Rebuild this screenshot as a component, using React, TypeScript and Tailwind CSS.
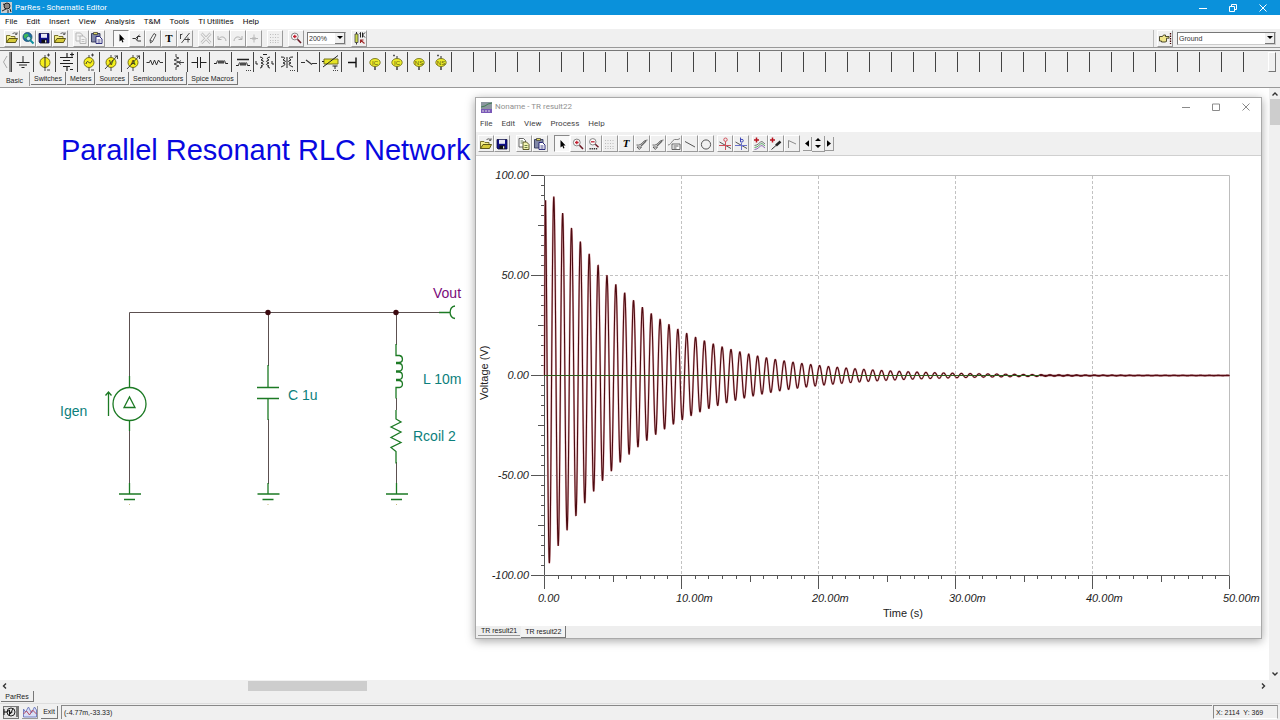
import React from "react";

const UI = "font-[Roboto,'Noto_Sans',sans-serif]";
const OLD = "font-['Liberation_Sans',Arial,sans-serif]";

type GlyphProps = { name: string };

/* 16x16 toolbar glyphs */
function Glyph({ name }: GlyphProps) {
  const glyphs: Record<string, React.ReactNode> = {
    open: (
      <>
        <path d="M2.500 12.500V5.500h3.500l1 1h4v2" fill="#f4ee8a" stroke="#6b6420" strokeWidth=".9" />
        <path d="M2.500 12.500l2.500-4h8.500L11.500 12.500z" fill="#d6ca3a" stroke="#4d470c" strokeWidth=".9" />
        <path d="M8.500 4c1-1.500 2.500-1.500 4-.2M13 2.300v2h-2" fill="none" stroke="#333" strokeWidth=".8" />
      </>
    ),
    web: (
      <>
        <circle cx="7.500" cy="7" r="4.500" fill="#1f6fa8" stroke="#164a70" strokeWidth=".8" />
        <path d="M4 5c2-2 4-1 4.500 0S7 7 6.500 8 4.500 8 4 7.500zM9.500 7l2 0-1 3-1.500-1z" fill="#3fb858" />
        <path d="M9 9l4.500 4.500" stroke="#0b8f9e" strokeWidth="2" />
        <circle cx="8.500" cy="8.500" r="2.200" fill="#bfe6ee" stroke="#0b5f6e" strokeWidth=".8" />
      </>
    ),
    save: (
      <>
        <path d="M3 3.500h10v9.500H4L3 12z" fill="#10108a" stroke="#0a0a3c" strokeWidth=".8" />
        <path d="M5 3.800h6v4H5z" fill="#e9e9f4" />
        <path d="M5.500 9.500h5.500v3.500H5.500z" fill="#111" />
        <path d="M9 10.200h1.300v2.300H9z" fill="#ddd" />
      </>
    ),
    copyGrey: (
      <>
        <path d="M3 3h4.500l2 2v6H3z" fill="#f3f3f3" stroke="#b5b5b5" />
        <path d="M7 6h3.500l2.500 2.500V13.500H7z" fill="#f3f3f3" stroke="#b5b5b5" />
        <path d="M8.500 9.500h3M8.500 11.500h3M4.500 6h2.500" stroke="#b5b5b5" strokeWidth=".8" />
      </>
    ),
    copy: (
      <>
        <path d="M3 2.500h4.500l2 2V11H3z" fill="#fff" stroke="#555" strokeWidth=".9" />
        <path d="M7 6h3.500l2.500 2.500V13.500H7z" fill="#f2f4b0" stroke="#4a4a16" strokeWidth=".9" />
        <path d="M8.500 9.500h3M8.500 11.500h3M4.500 5h2.500M4.500 7h2" stroke="#44602a" strokeWidth=".8" />
      </>
    ),
    paste: (
      <>
        <path d="M2.500 3.500h8.500v8.500H2.500z" fill="#8087a6" stroke="#33385a" strokeWidth=".9" />
        <path d="M4.500 2.500h4v2h-4z" fill="#e0d860" stroke="#333" strokeWidth=".7" />
        <path d="M7 6.500h3.500L13 9v4.500H7z" fill="#fff" stroke="#191970" strokeWidth=".9" />
        <path d="M8.500 10h3M8.500 12h3" stroke="#191970" strokeWidth=".8" />
      </>
    ),
    cursor: <path d="M6.500 4v7.500l1.800-1.500 1.100 2.500 1.100-.5-1.100-2.400h2.200z" fill="#000" />,
    node: (
      <path d="M3.500 8.500h3l4-3.500M6.500 8.500l2 2.500h3.500M8.500 6.500v3M8.500 6.500h3" fill="none" stroke="#333" strokeWidth="1" />
    ),
    pencil: (
      <path d="M5.500 13l-.5-3L9 3.500l2 1.300L7.500 11.500zM5 10l2.500 1.500" fill="#f6f6f6" stroke="#444" strokeWidth=".9" />
    ),
    wire: (
      <path d="M3.500 4v5M3.500 5l2-1M12.500 3L4.500 13M7.500 9.500h5.500M11 7.500v5" fill="none" stroke="#333" strokeWidth=".9" />
    ),
    del: (
      <>
        <path d="M3.500 3.500l9 9.500M12.500 3.500l-9 9.500" stroke="#b4b4b4" strokeWidth="2.600" />
        <path d="M3.500 3.500l9 9.500M12.500 3.500l-9 9.500" stroke="#f0f0f0" strokeWidth="1.200" />
      </>
    ),
    undo: <path d="M4 6v3.500h3.500M4.500 9c2-3 7-3 7.500 2" fill="none" stroke="#b0b0b0" strokeWidth="1" />,
    redo: <path d="M12 6v3.500H8.500M11.500 9c-2-3-7-3-7.500 2" fill="none" stroke="#b0b0b0" strokeWidth="1" />,
    plus: <path d="M8 4.500v8M4 8.500h8M6.500 7l3 3M9.500 7l-3 3" stroke="#b8b8b8" strokeWidth="1" />,
    grid: <path d="M3 4.500h10M3 7.500h10M3 10.500h10M3 12.500h10" stroke="#bdbdbd" strokeDasharray="1 1.500" />,
    zoomIn: (
      <>
        <circle cx="6.800" cy="6.500" r="3.400" fill="#fff" stroke="#777" strokeWidth=".9" />
        <path d="M5 6.500h3.600M6.800 4.700v3.600" stroke="#c02030" strokeWidth="1.300" />
        <path d="M9.500 9.200l3.500 3.800" stroke="#6b1a25" strokeWidth="1.600" />
      </>
    ),
    zoomOut: (
      <>
        <circle cx="6.800" cy="5.800" r="3.200" fill="#fff" stroke="#777" strokeWidth=".9" />
        <path d="M5 5.800h3.600" stroke="#c02030" strokeWidth="1.300" />
        <path d="M9.300 8.300l3.200 3" stroke="#6b1a25" strokeWidth="1.500" />
        <path d="M3.500 12.700h8.500" stroke="#333" strokeWidth="1.600" strokeDasharray="1.300 .8" />
      </>
    ),
    values: (
      <>
        <path d="M4 4h3v8.500H4z" fill="#cbd84a" stroke="#444" strokeWidth=".8" />
        <path d="M5.500 2v2M5.500 12.500v2" stroke="#333" />
        <path d="M9.500 2.500v5M8.500 3.500l1-1M11.500 2.500v5M14 2.500l-2.500 2.500L14 7.500" fill="none" stroke="#222" />
        <path d="M13.500 13.500l-4-3.500M9.500 13v-3h3" fill="none" stroke="#a02a2a" strokeWidth="1.100" />
      </>
    ),
    hand: (
      <>
        <path d="M2.500 6.500h3l1-1.500h2v1.500h3.500v1.700H9.500v3.300L8 12H4.500v-1h-2z" fill="#efe58a" stroke="#3c3a20" strokeWidth=".9" />
        <path d="M13.500 3v11" stroke="#400" strokeWidth="1.300" strokeDasharray="1.500 1" />
      </>
    ),
    curveA: (
      <>
        <path d="M2.500 9c3.500.5 4-.5 6-2.500s3-2 5-2.500" fill="none" stroke="#555" strokeWidth=".9" />
        <path d="M12 5L7 10" stroke="#666" strokeWidth="1.500" />
        <path d="M3 11h4.500l-2.200 2.500z" fill="#eee" stroke="#444" strokeWidth=".8" />
      </>
    ),
    legend: (
      <>
        <path d="M2 9c2 0 3-2 5-4.500S11 5 14 2.500" fill="none" stroke="#777" strokeWidth=".9" />
        <path d="M6 8h8v5.500H6z" fill="#fff" stroke="#555" strokeWidth=".9" />
        <path d="M7.500 10h5M7.500 12h3" stroke="#333" strokeWidth=".8" />
      </>
    ),
    line: <path d="M3 5.500l10 5.500" stroke="#555" />,
    circle: <circle cx="8" cy="8.500" r="4.600" fill="none" stroke="#555" />,
    cursorA: (
      <>
        <path d="M2.500 6L14 12.500" stroke="#444" strokeWidth=".9" />
        <path d="M8.500 5.500V14M2 9.500h12" stroke="#d0505a" />
        <circle cx="8.500" cy="3.700" r="1.700" fill="none" stroke="#d0505a" />
      </>
    ),
    cursorB: (
      <>
        <path d="M2.500 6L14 12.500" stroke="#444" strokeWidth=".9" />
        <path d="M8.500 7V14M2 9.500h12" stroke="#6870cc" />
        <path d="M7.500 1.500v4.500h1.500a1.300 1.300 0 000-2.600H7.500" fill="none" stroke="#4048b8" />
      </>
    ),
    addCurves: (
      <>
        <path d="M2.500 9.500c4 0 5-4 7.500-4l3 2.500" fill="none" stroke="#666" strokeWidth=".9" />
        <path d="M2.500 11.500c4 0 5-4 7.500-4l3 2.500" fill="none" stroke="#4aa25a" strokeWidth=".9" />
        <path d="M2.500 13.500c4 0 5-4 7.500-4l3 2.500" fill="none" stroke="#8a5ab0" strokeWidth=".9" />
        <path d="M4.500 1.500v5M2 4h5" stroke="#b81420" strokeWidth="1.500" />
      </>
    ),
    probe: (
      <>
        <path d="M3.500 13.500l4.500-4" stroke="#333" />
        <path d="M8 9.500L12.500 5.500" stroke="#222" strokeWidth="2.500" />
        <path d="M4.500 1.500v5M2 4h5" stroke="#b81420" strokeWidth="1.500" />
      </>
    ),
    corner: <path d="M4.500 12V4.500l7.500 3.500" fill="none" stroke="#8a8a8a" />,
    analysis: (
      <>
        <circle cx="8" cy="8" r="4" fill="none" stroke="#222" />
        <path d="M1 8h3l2.500-2v4l3-2M14 3v10M1 5v6M10 5l-4 6" fill="none" stroke="#111" />
      </>
    ),
    diagram: (
      <>
        <path d="M1.500 13V5l2 3 3-5 3 6 3-6 2 3v7z" fill="#d9dff6" stroke="#6a75bd" strokeWidth=".9" />
        <path d="M1.500 10l3-3 3 4 3-5 4 4" fill="none" stroke="#b54a64" />
      </>
    ),
  };
  return (
    <svg viewBox="0 0 16 16" className="h-4 w-4 shrink-0" aria-hidden="true">
      {glyphs[name]}
    </svg>
  );
}

function ToolButton({ name, pressed = false }: { name: string; pressed?: boolean }) {
  const edge = pressed
    ? "border-t-[#8a8a8a] border-l-[#8a8a8a] border-r-white border-b-white bg-[#f8f8f8]"
    : "border-t-white border-l-white border-r-[#9a9a9a] border-b-[#9a9a9a] bg-[#f0f0f0]";
  return (
    <button
      aria-label={name}
      className={`flex h-[17px] w-4 shrink-0 items-center justify-center overflow-hidden border ${edge}`}
    >
      {name === "text" ? (
        <span className="font-['Liberation_Serif',serif] text-[11px] leading-none font-bold text-black">T</span>
      ) : name === "textItalic" ? (
        <span className="font-['Liberation_Serif',serif] text-[11px] leading-none font-bold text-black italic">T</span>
      ) : (
        <Glyph name={name} />
      )}
    </button>
  );
}

function ToolGroup({ names, pressed }: { names: string[]; pressed?: string }) {
  return (
    <div className="flex">
      {names.map((n, i) => (
        <ToolButton key={i} name={n} pressed={n === pressed} />
      ))}
    </div>
  );
}

const coil = "q1.500-6 2.500 0q1-6 2 0q1-6 2 0q1-6 2.500 0";

function source(inner: React.ReactNode, arrow = false) {
  return (
    <>
      <path d="M11 3v16" stroke="#444" />
      <circle cx="11" cy="10.500" r="5" fill="#f6ee1c" stroke="#6b6710" strokeWidth=".9" />
      {inner}
      {arrow ? (
        <path d="M5 17L17.500 3.500M14.500 4h3v3" fill="none" stroke="#333" strokeWidth=".9" />
      ) : (
        <path d="M13 3h3M14.500 1.500v3M13 18h3" stroke="#333" strokeWidth=".9" />
      )}
    </>
  );
}

function meterChip(label: string, dot: boolean) {
  return (
    <>
      <path d="M11 14v4" stroke="#222" strokeWidth="1.300" />
      <ellipse cx="11" cy="10.500" rx="5.200" ry="4" fill="#eceb2a" stroke="#77751c" strokeWidth=".9" />
      <text x="11" y="12.500" textAnchor="middle" fontSize="6" fill="#55530c" fontFamily="Liberation Sans">
        {label}
      </text>
      {dot && <path d="M7 3.500h2M11 4v2.500" stroke="#555" strokeWidth="1.300" />}
    </>
  );
}

const letter = (t: string) => (
  <text x="11" y="13" textAnchor="middle" fontSize="7" fontWeight="700" fill="#4a470c" fontFamily="Liberation Sans">
    {t}
  </text>
);

const parts: { label: string; art: React.ReactNode }[] = [
  { label: "Ground", art: <path d="M11 4v6M4.500 10.500h13M7 13h8M9.500 15.500h3" stroke="#222" fill="none" /> },
  { label: "Voltage source", art: source(<path d="M11 5v11" stroke="#333" />) },
  {
    label: "Battery",
    art: <path d="M11 1v4M4 5.500h13M7 8.500h7M4 11.500h13M7 14.500h7M11 15v4M14 2.500h4M16 .5v4M14 17.500h3" stroke="#222" fill="none" strokeWidth="1.200" />,
  },
  { label: "Voltage generator", art: source(<path d="M8 12c1-4 2-2 3-1.500s2 1 3-2" fill="none" stroke="#333" />) },
  { label: "Voltmeter", art: source(letter("V"), true) },
  { label: "Ammeter", art: source(letter("A"), true) },
  { label: "Resistor", art: <path d="M2.500 10.500h3l1-2.500 2 5 2-5 2 5 2-5 1.500 2.500h3" stroke="#333" fill="none" /> },
  {
    label: "Potentiometer",
    art: <path d="M10 2v3l3 1-5 2 5 2-5 2 5 2-3 1v3M18 10.500h-5M15 8.500l-2.500 2 2.500 2" stroke="#444" fill="none" />,
  },
  { label: "Capacitor", art: <path d="M3.500 10.500h6M9.500 5v11M12.500 5v11M12.500 10.500h6" stroke="#222" fill="none" /> },
  { label: "Inductor", art: <path d={"M4 11.500h2.500" + coil + "h2.500"} stroke="#222" fill="none" /> },
  {
    label: "Coil with core",
    art: (
      <>
        <path d={"M4 13.500h2.500" + coil + "h2.500"} stroke="#222" fill="none" />
        <path d="M5 7.500h12" stroke="#222" strokeWidth="1.500" />
        <path d="M14 18.500h6" stroke="#444" strokeDasharray="1 1" />
      </>
    ),
  },
  {
    label: "Coupled inductors",
    art: (
      <path d="M6 5q5 1 1 3 5 1 0 3 5 1 0 3 3 1-1 2M16 5q-5 1-1 3-5 1 0 3-5 1 0 3-3 1 1 2M2 9v3h2M18 9v3h2M9 2.500h4" stroke="#222" fill="none" />
    ),
  },
  {
    label: "Transformer",
    art: (
      <>
        <path d="M5 5q6 0 2 3 5 1 0 3 5 1-2 4M17 5q-6 0-2 3-5 1 0 3-5 1 2 4M11 5v11" stroke="#222" fill="none" />
        <path d="M14 18.500h6" stroke="#444" strokeDasharray="1 1" />
      </>
    ),
  },
  { label: "Switch", art: <path d="M3 10.500h4M8 8l6 4.500M14 11.500h5" stroke="#333" fill="none" strokeWidth="1.200" /> },
  {
    label: "Controlled source",
    art: (
      <>
        <path d="M4 7h14v5H4z" fill="#e6e424" stroke="#77751c" />
        <path d="M3 15L18 3.500M2 9.500h2M12.500 14h5M15 14v3" stroke="#222" fill="none" />
        <path d="M13 18.500h6" stroke="#444" strokeDasharray="1 1" />
      </>
    ),
  },
  { label: "Jumper", art: <path d="M6 10.500h8M14 5.500v10" stroke="#111" fill="none" strokeWidth="1.400" /> },
  { label: "Initial condition", art: meterChip("IC", false) },
  { label: "Initial condition probe", art: meterChip("IC", true) },
  { label: "Nodeset", art: meterChip("NS", false) },
  { label: "Nodeset probe", art: meterChip("NS", true) },
];

function PartsBar() {
  const slots = Array.from({ length: 57 }, (_, i) => parts[i]);
  return (
    <div className="flex h-[22px] items-center border-t border-[#777] bg-[#f0f0f0] pr-1">
      <button aria-label="Scroll left" className="flex h-5 w-[11px] shrink-0 items-center justify-center border-r-2 border-[#888]">
        <svg viewBox="0 0 6 14" className="h-[14px] w-[6px]" aria-hidden="true">
          <path d="M5 1L1.500 7 5 13" fill="none" stroke="#aaa" />
        </svg>
      </button>
      <div className="flex min-w-0 flex-1 overflow-hidden">
        {slots.map((p, i) => (
          <button
            key={i}
            aria-label={p ? p.label : "Empty slot"}
            className="h-5 w-[22px] shrink-0 border-l border-[#444]"
          >
            {p && (
              <svg viewBox="0 0 22 20" className="h-5 w-[22px]" aria-hidden="true">
                {p.art}
              </svg>
            )}
          </button>
        ))}
      </div>
      <button aria-label="Scroll right" className="h-5 w-2 shrink-0 border border-t-white border-r-[#777] border-b-[#777] border-l-white" />
    </div>
  );
}

function Ground({ x }: { x: number }) {
  return (
    <>
      <path d={`M${x} 483v11M${x - 10.500} 494h22M${x - 5.500} 499.500h11`} stroke="#1c7a24" fill="none" strokeWidth="1.300" />
      <path d={`M${x - 0.500} 504.500h1`} stroke="#c9bb7a" />
    </>
  );
}

function Schematic() {
  return (
    <svg viewBox="0 88 475 592" className={`h-[592px] w-[475px] shrink-0 ${OLD}`} role="img" aria-label="Parallel resonant RLC network">
      <text x="61" y="160" fontSize="29" fill="#0808e0">Parallel Resonant RLC Network</text>
      <g fill="none" stroke="#5c5050" strokeWidth="1">
        <path d="M129.500 377V312.500H440M129.500 430v54M268.500 312v54M268.500 419v65M396.500 312v33M396.500 398v12M396.500 462v22" />
      </g>
      <g fill="none" stroke="#1c7a24" strokeWidth="1.300">
        <path d="M129.500 376v11.500M129.500 420v11" />
        <circle cx="129.500" cy="404" r="16.500" />
        <path d="M124 407.500h11l-5.500-10.500zM108.500 416v-23M105.500 395.500l3-3.500 3 3.500" />
        <path d="M268 365v22M257 387.500h22M257 398.500h22M268 398v22" />
        <path d="M396 344v11.500h3.500c4 1 4 7-.5 7h-3M396 363.500h3c4.500 0 4.500 7.500 0 7.500h-3M396 372h3c4.500 0 4.500 7.500 0 7.500h-3M396 380.500h3c4.500 0 4.500 7 .5 7H396v11" />
        <path d="M396 410v9l5 3-10 5 10 5-10 5.500 10 5-10 5 5 4v12" />
        <path d="M439 312.500h11M455 306c-6.500 1-6.500 11.500 0 12.500" />
      </g>
      <circle cx="268" cy="312.500" r="2.700" fill="#3c0a10" />
      <circle cx="396" cy="312.500" r="2.700" fill="#3c0a10" />
      <Ground x={129.5} />
      <Ground x={268} />
      <Ground x={396.5} />
      <g fontSize="14" fill="#0c7f7c">
        <text x="60" y="416">Igen</text>
        <text x="288" y="400">C 1u</text>
        <text x="423" y="384">L 10m</text>
        <text x="413" y="441">Rcoil 2</text>
      </g>
      <text x="433" y="298" fontSize="14" fill="#7a0a7a">Vout</text>
    </svg>
  );
}

function wavePath() {
  const pts = ["M544.5 375.5", "L545 209"];
  for (let x = 545.6; x <= 1229.5; x += 0.2) {
    const v = 99.5 * Math.exp(-(x - 544) / 92) * Math.cos((2 * Math.PI * (x - 544.95)) / 8.86);
    pts.push(`L${x.toFixed(1)} ${(375.5 - v * 2).toFixed(2)}`);
  }
  return pts.join("");
}
const WAVE = wavePath();

function Chart() {
  const yMinor = Array.from({ length: 41 }, (_, i) => i);
  const xMinor = Array.from({ length: 51 }, (_, i) => i);
  const yLabels = ["100.00", "50.00", "0.00", "-50.00", "-100.00"];
  const xLabels: [number, string][] = [
    [538, "0.00"],
    [676, "10.00m"],
    [812, "20.00m"],
    [949, "30.00m"],
    [1086, "40.00m"],
    [1223, "50.00m"],
  ];
  return (
    <svg viewBox="476 156 785 470" preserveAspectRatio="xMinYMin meet" className={`h-full w-full ${OLD}`} role="img" aria-label="Voltage over time">
      <g stroke="#c2c2c2" strokeDasharray="3 2" fill="none">
        <path d="M545 275.500H1229M545 475.500H1229" />
        <path d="M681.500 176V575M818.500 176V575M955.500 176V575M1092.500 176V575" />
      </g>
      <path d="M545 175.500H1229.500V575" fill="none" stroke="#bdbdbd" />
      <path d="M544.500 175.500V575.500H1229.500" fill="none" stroke="#555" />
      <g stroke="#555">
        {yMinor.map((i) => (
          <path key={i} d={`M${i % 10 === 0 ? 531 : i % 5 === 0 ? 538 : 541} ${175.5 + i * 10}H544`} />
        ))}
        {xMinor.map((i) => (
          <path key={i} d={`M${Math.round(544 + i * 13.7) + 0.5} 576V${i % 10 === 0 ? 589 : i % 5 === 0 ? 582 : 579}`} />
        ))}
      </g>
      <path d={WAVE} fill="none" stroke="#e6b4b8" strokeWidth="2" strokeLinejoin="bevel" />
      <path d={WAVE} fill="none" stroke="#4c0a10" strokeWidth="1.100" strokeLinejoin="bevel" />
      <path d="M544 375.500H1100" stroke="#2f5c1c" strokeWidth="1.200" />
      <path d="M1040 375.500H1229.500" stroke="#560d14" strokeWidth="1.400" />
      <g fontSize="11" fontStyle="italic" fill="#1c1c1c">
        {yLabels.map((t, i) => (
          <text key={t} x="529" y={179 + i * 100} textAnchor="end">
            {t}
          </text>
        ))}
        {xLabels.map(([x, t]) => (
          <text key={t} x={x} y="602">
            {t}
          </text>
        ))}
      </g>
      <text x="883" y="617" fontSize="11" fill="#222">Time (s)</text>
      <text transform="translate(488 400) rotate(-90)" fontSize="11" fill="#222">Voltage (V)</text>
    </svg>
  );
}

function WindowControls({ color, restore }: { color: string; restore: boolean }) {
  return (
    <div className={`flex ${color}`}>
      <button aria-label="Minimize" className="flex w-[30px] items-center justify-center">
        <svg viewBox="0 0 8 8" className="h-2 w-2" aria-hidden="true"><path d="M0 4.500h8" stroke="currentColor" /></svg>
      </button>
      <button aria-label={restore ? "Restore" : "Maximize"} className="flex w-[30px] items-center justify-center">
        <svg viewBox="0 0 8 8" className="h-2 w-2" fill="none" stroke="currentColor" aria-hidden="true">
          {restore ? <path d="M.5 2.500h5v5h-5zM2.500 2V.500h5v5H6" /> : <path d="M.5 1h7v6.500h-7z" />}
        </svg>
      </button>
      <button aria-label="Close" className="flex w-[30px] items-center justify-center">
        <svg viewBox="0 0 8 8" className="h-2 w-2" aria-hidden="true"><path d="M.5.500l7 7M7.500.500l-7 7" stroke="currentColor" /></svg>
      </button>
    </div>
  );
}

function ResultWindow() {
  return (
    <section className="absolute top-[9px] right-[7px] bottom-[41px] left-[475px] flex flex-col border border-[#a9a9a9] bg-white shadow-[0_2px_9px_rgba(0,0,0,0.35)]">
      <header className={`flex h-[18px] shrink-0 items-center text-[8px] text-[#909090] ${UI}`}>
        <svg viewBox="0 0 11 11" className="mr-[3px] ml-[5px] h-[11px] w-[11px]" aria-hidden="true">
          <path d="M0 0h11v11H0z" fill="#8c96a0" />
          <path d="M0 5l4-1 3-2 4-1" stroke="#3f7d50" fill="none" />
          <path d="M0 7h11v4H0z" fill="#7a58b8" />
          <path d="M1 9h9" stroke="#ddd" strokeDasharray="2 1" />
        </svg>
        <span className="flex-1">Noname - TR result22</span>
        <WindowControls color="text-[#8a8a8a]" restore={false} />
      </header>
      <nav className={`flex h-4 shrink-0 items-center gap-[9px] pl-[4px] text-[8px] text-[#444] ${UI}`}>
        {["File", "Edit", "View", "Process", "Help"].map((m) => (
          <button key={m}>{m}</button>
        ))}
      </nav>
      <div className="flex h-6 shrink-0 items-center gap-[3px] border-b border-[#d0d0d0] bg-[#f0f0f0] pl-[2px]">
        <div className="flex gap-[6px]">
          <ToolGroup names={["open", "save"]} />
          <ToolGroup names={["copy", "paste"]} />
          <ToolGroup
            names={["cursor", "zoomIn", "zoomOut", "grid", "textItalic", "curveA", "curveA", "legend", "line", "circle"]}
            pressed="cursor"
          />
        </div>
        <ToolGroup names={["cursorA", "cursorB"]} />
        <ToolGroup names={["addCurves", "probe", "corner"]} />
        <div className="flex items-center text-black">
          <button aria-label="Previous" className="flex h-[14px] w-[9px] items-center justify-center border-r border-b border-[#9a9a9a]">
            <svg viewBox="0 0 5 8" className="h-[7px] w-[4px]" aria-hidden="true"><path d="M5 0v8L0 4z" /></svg>
          </button>
          <button aria-label="Stepper" className="flex h-4 w-[13px] items-center justify-center border-r border-b border-[#9a9a9a]">
            <svg viewBox="0 0 6 12" className="h-[12px] w-[6px]" aria-hidden="true"><path d="M0 4h6L3 1zM0 8h6l-3 3z" /></svg>
          </button>
          <button aria-label="Next" className="flex h-[14px] w-[9px] items-center justify-center border-r border-b border-[#9a9a9a]">
            <svg viewBox="0 0 5 8" className="h-[7px] w-[4px]" aria-hidden="true"><path d="M0 0v8l5-4z" /></svg>
          </button>
        </div>
      </div>
      <div className="min-h-0 flex-1">
        <Chart />
      </div>
      <div className={`flex h-3 shrink-0 gap-px bg-[#eeeeee] pl-[2px] text-[7px] leading-none text-[#222] ${OLD}`}>
        <button className="h-[10px] border-b border-[#999] px-[3px]">TR result21</button>
        <button className="h-[12px] border-r border-b border-[#777] bg-[#f3f3f3] px-[4px]">TR result22</button>
      </div>
    </section>
  );
}

function Chevron({ d }: { d: string }) {
  return (
    <svg viewBox="0 0 8 8" className="h-2 w-2" aria-hidden="true">
      <path d={d} fill="none" stroke="#333" strokeWidth="1.400" />
    </svg>
  );
}

function ComboBox({ label, options, className }: { label: string; options: string[]; className: string }) {
  return (
    <label className={`relative flex h-[13px] items-center border border-t-[#777] border-r-[#ccc] border-b-[#ccc] border-l-[#777] bg-white ${className}`}>
      <select aria-label={label} className={`h-full w-full appearance-none bg-transparent pl-px text-[7px] leading-none text-[#333] ${OLD}`}>
        {options.map((o) => (
          <option key={o}>{o}</option>
        ))}
      </select>
      <span className="pointer-events-none absolute inset-y-0 right-0 flex w-[10px] items-center justify-center border-r border-b border-[#777] bg-[#f0f0f0]">
        <svg viewBox="0 0 6 3" className="h-[3px] w-[6px]" aria-hidden="true"><path d="M0 0h6L3 3z" /></svg>
      </span>
    </label>
  );
}

export default function App() {
  return (
    <div className={`flex h-screen flex-col overflow-hidden bg-[#f0f0f0] ${UI}`}>
      <header className="flex h-[15px] shrink-0 items-center bg-[#0a91db] pr-[2px] text-[8px] leading-none text-white">
        <svg viewBox="0 0 11 11" className="mr-[3px] ml-px h-[11px] w-[11px]" aria-hidden="true">
          <path d="M0 0h11v11H0z" fill="#c8cdd0" />
          <circle cx="6" cy="4" r="3" fill="#8c8682" stroke="#222" />
          <path d="M1 9l4-2M2 2l2 1M7 8v3M9 7l1 3" stroke="#222" />
        </svg>
        <h1 className="flex-1">ParRes - Schematic Editor</h1>
        <WindowControls color="text-white" restore />
      </header>

      <nav className="flex h-[14px] shrink-0 items-center gap-[9px] bg-white pl-[5px] text-[8px] leading-none text-[#111]">
        {["File", "Edit", "Insert", "View", "Analysis", "T&M", "Tools", "TI Utilities", "Help"].map((m) => (
          <button key={m}>{m}</button>
        ))}
      </nav>

      <div className="flex h-[19px] shrink-0 items-center border-b border-[#999] pl-1">
        <div className="flex items-center gap-[5px]">
          <ToolGroup names={["open", "web", "save", "open"]} />
          <ToolGroup names={["copyGrey", "paste"]} />
          <div className="pl-[3px]">
            <ToolGroup names={["cursor", "node", "pencil", "text", "wire"]} pressed="cursor" />
          </div>
          <ToolGroup names={["del", "undo", "redo", "plus"]} />
          <ToolGroup names={["grid"]} />
          <div className="flex items-center gap-[3px]">
            <ToolGroup names={["zoomIn"]} />
            <ComboBox label="Zoom" options={["200%"]} className="w-[39px]" />
          </div>
          <ToolGroup names={["values"]} />
        </div>
        <span className="flex-1" />
        <div className="flex items-center gap-1 border-l border-[#bbb] pr-1 pl-[3px]">
          <ToolButton name="hand" />
          <ComboBox label="Component" options={["Ground"]} className="w-[99px]" />
        </div>
      </div>

      <div className="mt-[2px] shrink-0">
        <PartsBar />
      </div>

      <div className={`flex h-[16px] shrink-0 items-start border-b border-[#999] text-[7px] leading-none text-[#222] ${OLD}`}>
        <button className="h-[14px] w-[30px] border-r border-[#999] pt-[2px]">Basic</button>
        <div className="flex gap-px pl-px">
          {["Switches", "Meters", "Sources", "Semiconductors", "Spice Macros"].map((t) => (
            <button key={t} className="h-[13px] border-r border-b border-[#777] px-[3px]">
              {t}
            </button>
          ))}
        </div>
      </div>

      <main className="flex min-h-0 flex-1">
        <div className="relative flex min-w-0 flex-1 overflow-hidden bg-white">
          <Schematic />
          <ResultWindow />
        </div>
        <div className="flex w-[11px] shrink-0 flex-col items-center">
          <button aria-label="Scroll up" className="flex h-[11px] items-center"><Chevron d="M1.500 5.500L4 3l2.500 2.500" /></button>
          <div className="h-[26px] w-[10px] bg-[#cdcdcd]" />
          <span className="flex-1" />
          <button aria-label="Scroll down" className="flex h-[12px] items-center"><Chevron d="M1.500 2.500L4 5l2.500-2.500" /></button>
        </div>
      </main>

      <div className="flex h-[11px] shrink-0 items-center justify-between pr-[13px] pl-px">
        <button aria-label="Scroll left" className="flex"><Chevron d="M5 1.500L2.500 4 5 6.500" /></button>
        <div className="flex flex-1"><div className="ml-[239px] h-[10px] w-[119px] bg-[#cdcdcd]" /></div>
        <button aria-label="Scroll right" className="flex"><Chevron d="M3 1.500L5.500 4 3 6.500" /></button>
      </div>

      <div className={`flex h-[12px] shrink-0 pl-px text-[7px] leading-none text-[#222] ${OLD}`}>
        <button className="h-[11px] w-[33px] border-r border-b border-[#777]">ParRes</button>
      </div>

      <footer className={`flex h-[17px] shrink-0 items-center gap-px border-t border-[#ddd] pl-[3px] text-[7px] leading-none text-[#222] ${OLD}`}>
        <button aria-label="Editor" className="mr-[2px] flex h-[13px] w-4 items-center justify-center border border-[#777] bg-[#e4e4e4]"><Glyph name="analysis" /></button>
        <button aria-label="Diagram" className="flex h-[13px] w-4 items-center justify-center border-r border-b border-[#999]"><Glyph name="diagram" /></button>
        <button className="ml-[2px] h-[13px] w-[17px] border-r border-b border-[#777]">Exit</button>
        <div className="ml-[2px] flex h-[14px] flex-1 items-center border-t border-l border-[#888] pl-[2px]">(-4.77m,-33.33)</div>
        <div className="mr-[2px] flex h-[14px] w-[65px] items-center border border-t-[#888] border-r-[#aaa] border-b-white border-l-[#888] pl-[2px] whitespace-pre">X: 2114  Y: 369</div>
      </footer>
    </div>
  );
}
